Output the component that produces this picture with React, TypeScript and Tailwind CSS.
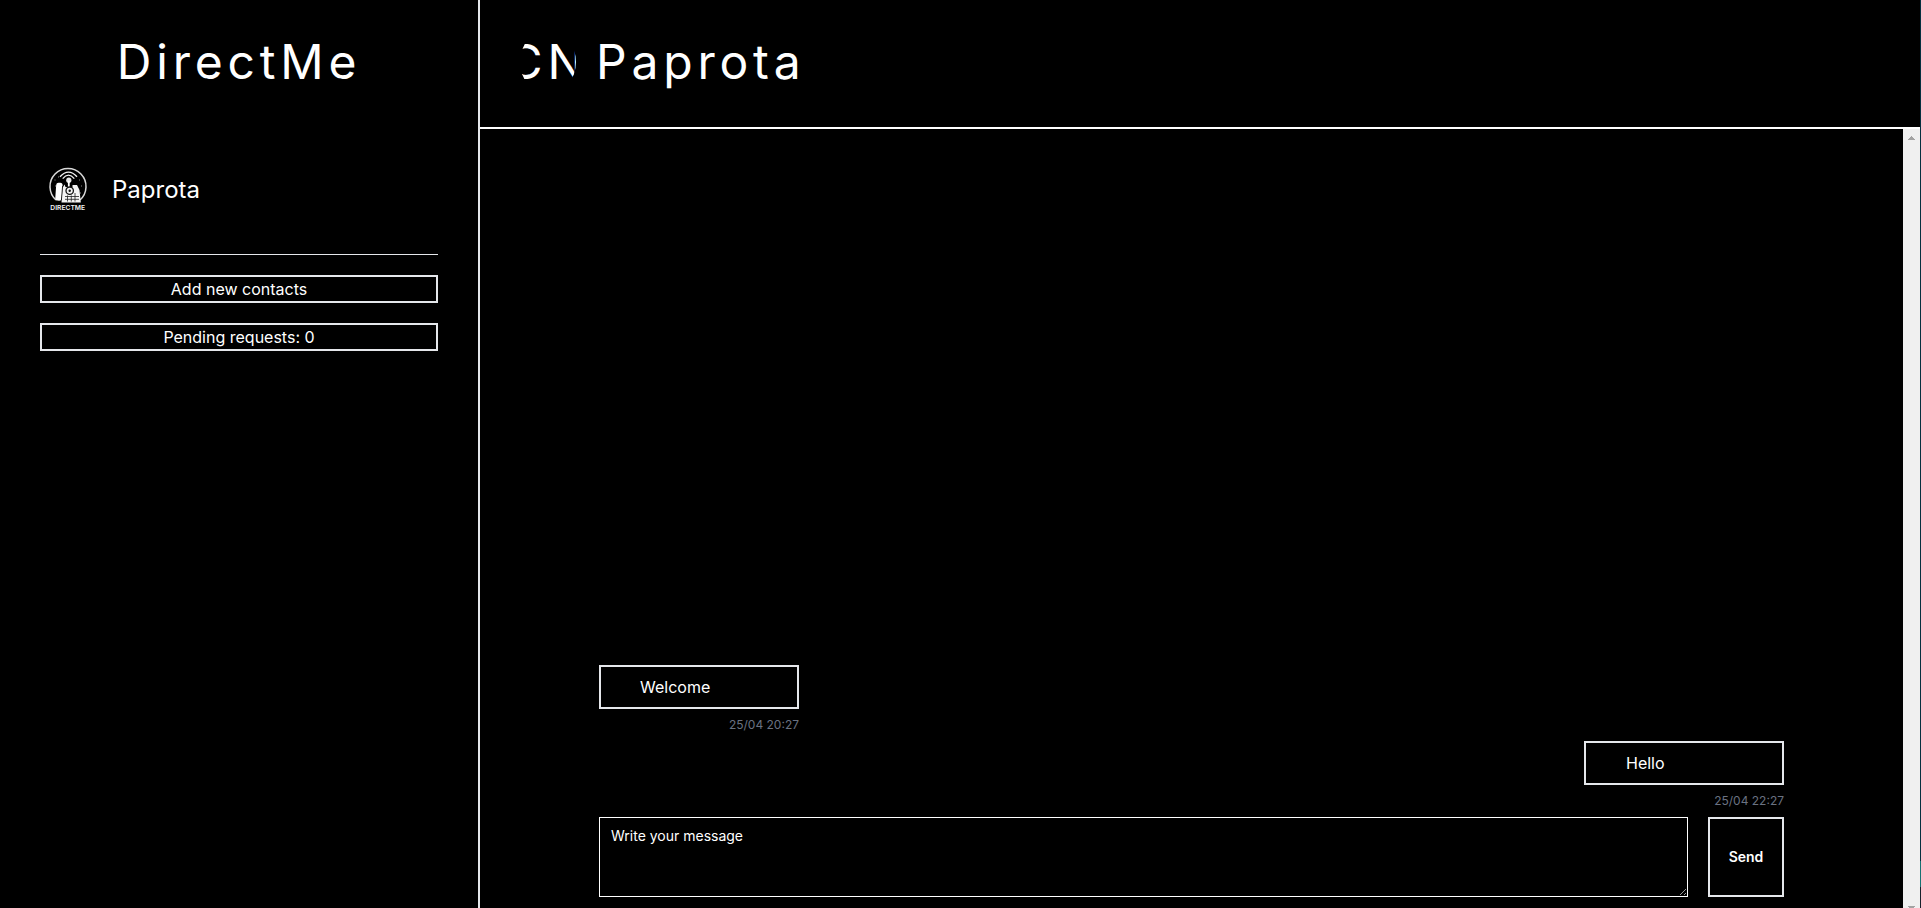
import React from "react";

function Logo() {
  return (
    <svg viewBox="0 0 40 46" className="h-[46px] w-10 shrink-0" fill="none">
      <path d="M8 34A18 18 0 1 1 32 34" stroke="#d8d8d8" strokeWidth="1.5" />
      <path d="M12 10.800Q20.500 1.500 29 10.800" stroke="#f4f4f4" strokeWidth="1.400" />
      <path d="M14.700 12.600Q20.500 5.800 26.300 12.600" stroke="#f4f4f4" strokeWidth="1.300" />
      <path d="M6.500 14h1M7 20h1M31 14h1M33 20h1M10 11h1M32 27h1" stroke="#888" strokeWidth="1" />
      <circle cx="20.800" cy="14.200" r="2.600" fill="#e8e8e8" />
      <path d="M20.800 15v6" stroke="#fff" strokeWidth="1.800" />
      <path d="M14.500 22l2-3.500 1 2.500h7v-2h4.500l2.500 5 1.300 12.500H13.500z" fill="#f4f4f4" />
      <rect x="7.700" y="16.700" width="6.400" height="18" rx="2.500" fill="#fff" transform="rotate(4 11 26)" />
      <path d="M14.600 20l-1.200 14" stroke="#000" strokeWidth=".8" />
      <circle cx="21.700" cy="24.700" r="3.700" stroke="#111" strokeWidth="1.300" />
      <circle cx="21.700" cy="24.700" r="1.200" fill="#111" />
      <path d="M17 30.500h14M17 33.300h14M19.500 29.500v6M23.300 29.500v6M27 27v8.500" stroke="#222" strokeWidth=".8" />
      <text x="19.700" y="44" textAnchor="middle" fontSize="6.600" fontWeight="600" fontFamily="Inter, sans-serif" fill="#f4f4f4" textLength="34.800" lengthAdjust="spacingAndGlyphs">DIRECTME</text>
    </svg>
  );
}

function Message({ text, time, own }: { text: string; time: string; own?: boolean }) {
  return (
    <div className={own ? "flex w-[200px] flex-col self-end" : "flex w-[200px] flex-col self-start"}>
      <div className={own ? "h-11 border-2 border-gray-200 px-10 py-2 text-base" : "h-11 border-2 border-gray-200 px-[39px] py-2 text-base"}>{text}</div>
      <time className="mt-2 h-4 text-right text-xs text-gray-500">{time}</time>
    </div>
  );
}

export default function App() {
  return (
    <div className="flex h-[908px] w-[1921px] overflow-hidden bg-black font-['Inter',sans-serif] text-white">
      <aside className="flex w-[480px] shrink-0 flex-col border-r-2 border-gray-200 px-10">
        <h1 className="mt-[38px] text-center text-5xl leading-[48px] tracking-widest">DirectMe</h1>
        <div className="mt-20 flex h-[46px] items-center gap-6 pl-2">
          <Logo />
          <span className="pt-0.5 text-2xl">Paprota</span>
        </div>
        <div className="mt-[42px] h-px shrink-0 bg-gray-200" />
        <button className="mt-5 h-7 border-2 border-gray-200 text-base leading-6">Add new contacts</button>
        <button className="mt-5 h-7 border-2 border-gray-200 text-base leading-6">Pending requests: 0</button>
      </aside>
      <div className="flex w-[1440px] shrink-0 flex-col">
        <header className="flex h-[129px] shrink-0 items-start border-b-2 border-white pt-[30px] pl-10 text-5xl leading-[64px] tracking-widest">
          <div className="flex h-16 w-14 justify-center overflow-hidden rounded-[50%]">CN</div>
          <span className="ml-5">Paprota</span>
        </header>
        <div className="flex min-h-0 grow">
          <main className="flex grow flex-col justify-end pr-[119px] pb-[11px] pl-[119px]">
            <Message text="Welcome" time="25/04 20:27" />
            <div className="mt-2 flex flex-col">
              <Message text="Hello" time="25/04 22:27" own />
            </div>
            <div className="mt-2 flex h-20 gap-5">
              <textarea className="h-20 min-w-0 grow border border-white bg-black px-[11px] py-2 text-sm placeholder:text-white" placeholder="Write your message" />
              <button className="w-[76px] border-2 border-gray-200 text-sm font-semibold">Send</button>
            </div>
          </main>
          <div className="flex w-[17px] shrink-0 flex-col items-center justify-between bg-[#f0f0f0] pt-[7px]">
            <svg className="h-1 w-[7px]" viewBox="0 0 7 4" shapeRendering="crispEdges"><path d="M3 0h1v1h1v1h1v1h1v1H0V3h1V2h1V1h1z" fill="#a3a3a3" /></svg>
            <svg className="h-0.5 w-[7px]" viewBox="0 0 7 2" shapeRendering="crispEdges"><path d="M0 0h7v1H6v1H1V1H0z" fill="#a3a3a3" /></svg>
          </div>
        </div>
      </div>
      <div className="flex w-px shrink-0 flex-col bg-[#06303f]">
        <div className="mt-[861px] h-[26px] bg-[#187272]" />
        <div className="grow bg-[#17212b]" />
      </div>
    </div>
  );
}
